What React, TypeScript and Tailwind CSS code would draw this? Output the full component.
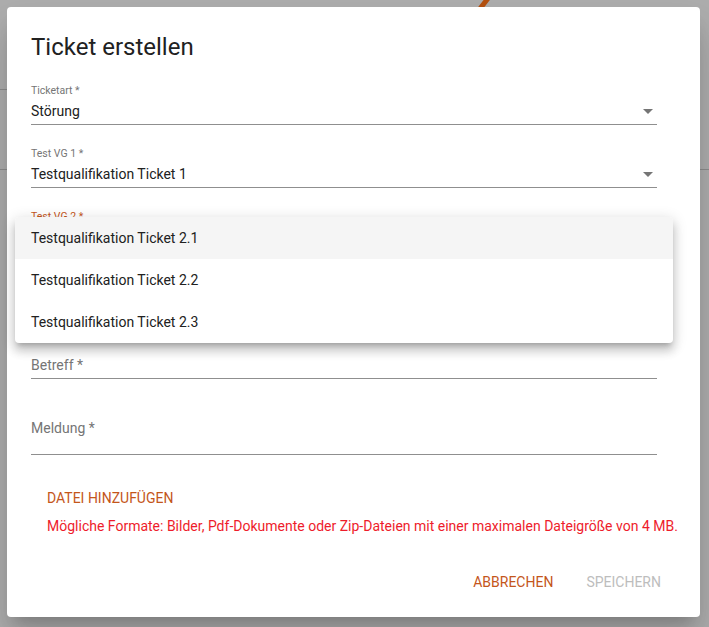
import React from "react";

const Arrow = () => (
  <svg width="24" height="24" viewBox="0 0 24 24" className="shrink-0 -mr-[3px]" fill="#757575">
    <path d="M7 10l5 5 5-5z" />
  </svg>
);

function SelectField({ label, value, labelClass = "text-[#757575]" }: { label: string; value: string; labelClass?: string }) {
  return (
    <div className="w-[626px] flex flex-col">
      <div className={`text-[10.5px] leading-[12px] ${labelClass}`}>{label}</div>
      <div className="mt-[2px] flex items-center justify-between h-[24px] border-b border-[#8f8f8f] pb-[1px] box-content">
        <span className="text-[14px] leading-[20px] text-[#212121]">{value}</span>
        <Arrow />
      </div>
    </div>
  );
}

export default function App() {
  return (
    <div
      className="relative w-[709px] h-[627px] bg-[#adadad] overflow-hidden"
      style={{ fontFamily: "Roboto, 'Liberation Sans', sans-serif" }}
    >
      {/* page behind the backdrop */}
      <div className="flex flex-col">
        <div className="h-[90px] w-[20px] border-b border-[#8c8c8c]" />
        <div className="h-[80px] w-full border-b border-[#8c8c8c]" />
      </div>
      <svg className="absolute left-[470px] top-0" width="30" height="10" viewBox="0 0 30 10">
        <line x1="9" y1="10" x2="19" y2="-3" stroke="#b4500f" strokeWidth="5" />
      </svg>

      {/* dialog */}
      <div className="absolute left-[7px] top-[7px] w-[693px] h-[610px] bg-white rounded-[4px] shadow-[0_11px_15px_-7px_rgba(0,0,0,0.2),0_24px_38px_3px_rgba(0,0,0,0.14)] flex flex-col">
        <div className="px-[24px] pt-[24px] flex flex-col">
          <h2 className="text-[24px] leading-[32px] font-normal text-[#212121]">Ticket erstellen</h2>

          <div className="mt-[22px]">
            <SelectField label="Ticketart *" value="Störung" />
          </div>
          <div className="mt-[23px]">
            <SelectField label="Test VG 1 *" value="Testqualifikation Ticket 1" />
          </div>
          <div className="mt-[23px]">
            <SelectField label="Test VG 2 *" value="" labelClass="text-[#c4561b]" />
          </div>

          {/* Betreff */}
          <div className="mt-[88px] w-[626px] border-b border-[#8f8f8f] pb-[3px] pt-[16px]">
            <div className="text-[14px] leading-[20px] text-[#757575]">Betreff *</div>
          </div>

          {/* Meldung */}
          <div className="mt-[23px] w-[626px] border-b border-[#8f8f8f] pb-[16px] pt-[16px]">
            <div className="text-[14px] leading-[20px] text-[#757575]">Meldung *</div>
          </div>

          <div className="mt-[33px] pl-[16px] text-[14px] leading-[20px] font-normal text-[#c4561b] uppercase">
            Datei hinzufügen
          </div>
          <div className="mt-[8px] pl-[16px] text-[14px] leading-[20px] text-[#ee1c2b] whitespace-nowrap">
            Mögliche Formate: Bilder, Pdf-Dokumente oder Zip-Dateien mit einer maximalen Dateigröße von 4 MB.
          </div>
        </div>

        <div className="mt-auto mb-[25px] flex justify-end items-center gap-[33px] pr-[39px]">
          <span className="text-[14px] leading-[20px] font-normal text-[#c4561b]">ABBRECHEN</span>
          <span className="text-[14px] leading-[20px] font-normal text-[#bdbdbd]">SPEICHERN</span>
        </div>

        {/* open select menu */}
        <div className="absolute left-[8px] top-[210px] w-[658px] bg-white rounded-[4px] shadow-[0_5px_5px_-3px_rgba(0,0,0,0.2),0_8px_10px_1px_rgba(0,0,0,0.14),0_3px_14px_2px_rgba(0,0,0,0.12)] overflow-hidden flex flex-col">
          <div className="h-[42px] flex items-center pl-[16px] bg-[#f5f5f5] text-[14px] text-[#212121]">Testqualifikation Ticket 2.1</div>
          <div className="h-[42px] flex items-center pl-[16px] text-[14px] text-[#212121]">Testqualifikation Ticket 2.2</div>
          <div className="h-[42px] flex items-center pl-[16px] text-[14px] text-[#212121]">Testqualifikation Ticket 2.3</div>
        </div>
      </div>
    </div>
  );
}
